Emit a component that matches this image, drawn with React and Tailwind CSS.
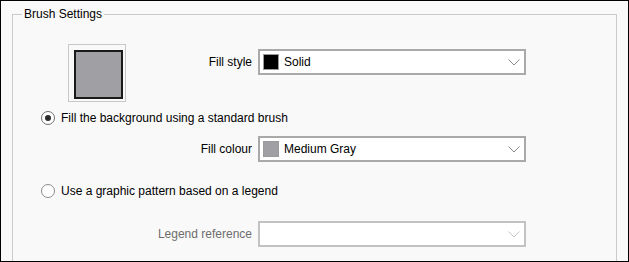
import React from "react";

const Chevron = ({ color = "#8a8a8a" }) => (
  <svg width="12" height="7" viewBox="0 0 12 7" className="shrink-0">
    <polyline points="0.5,0.5 6,6 11.5,0.5" fill="none" stroke={color} strokeWidth="1" />
  </svg>
);

const Combo = ({ swatch, text, disabled }) => (
  <div
    className={`flex items-center w-[268px] h-[26px] bg-white border-2 pl-[3px] pr-[4px] ${
      disabled ? "border-[#c2c2c2]" : "border-[#a9a9a9]"
    }`}
  >
    {swatch && (
      <div
        className="w-[16px] h-[16px] border border-[#9a9a9a] mr-[5px] shrink-0"
        style={{ backgroundColor: swatch }}
      />
    )}
    <span className="flex-1 text-black">{text}</span>
    <Chevron color={disabled ? "#c4c4c4" : "#8a8a8a"} />
  </div>
);

const Radio = ({ checked, label }) => (
  <div className="flex items-center ml-[28px] h-[16px]">
    <div
      className={`w-[14px] h-[14px] rounded-full border-[1.5px] bg-white flex items-center justify-center ${
        checked ? "border-[#6f6f6f]" : "border-[#8c8c8c]"
      }`}
    >
      {checked && <div className="w-[6px] h-[6px] rounded-full bg-[#2b2b2b]" />}
    </div>
    <span className="ml-[6px] text-black">{label}</span>
  </div>
);

export default function App() {
  return (
    <div
      className="w-[629px] h-[262px] border border-black bg-[#f9f9f9] overflow-hidden text-[12px] leading-[16px]"
      style={{ fontFamily: '"Segoe UI", "Liberation Sans", Arial, sans-serif' }}
    >
      <fieldset className="ml-[11px] mt-[5px] w-[605px] h-[300px] border border-[#cacaca]">
        <legend className="ml-[9px] px-[2px] text-black">Brush Settings</legend>

        <div className="flex items-start mt-[22px]">
          <div className="ml-[55px] w-[58px] h-[58px] border border-[#c8c8c8] p-[5px]">
            <div className="w-[49px] h-[49px] border-2 border-[#1a1a1a] bg-[#a09fa4]" />
          </div>
          <div className="flex items-center mt-[5px]">
            <div className="w-[126px] text-right text-black">Fill style</div>
            <div className="ml-[6px]">
              <Combo swatch="#000000" text="Solid" />
            </div>
          </div>
        </div>

        <div className="mt-[8px]">
          <Radio checked label="Fill the background using a standard brush" />
        </div>

        <div className="flex items-center mt-[10px]">
          <div className="w-[239px] text-right text-black">Fill colour</div>
          <div className="ml-[6px]">
            <Combo swatch="#a09fa4" text="Medium Gray" />
          </div>
        </div>

        <div className="mt-[21px]">
          <Radio label="Use a graphic pattern based on a legend" />
        </div>

        <div className="flex items-center mt-[22px]">
          <div className="w-[239px] text-right text-[#6d6d6d]">Legend reference</div>
          <div className="ml-[6px]">
            <Combo disabled text="" />
          </div>
        </div>
      </fieldset>
    </div>
  );
}
